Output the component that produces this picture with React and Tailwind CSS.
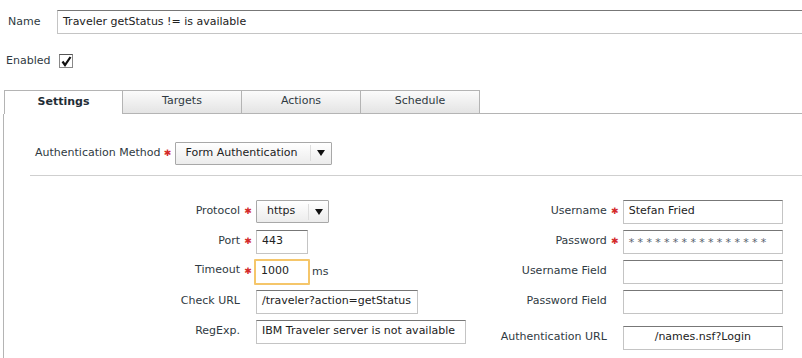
export default function App() {
  const input =
    "h-[24px] border border-[#c4c4c4] border-t-[#777] bg-white px-[5px] flex items-center whitespace-nowrap overflow-hidden shrink-0";

  return (
    <div className="w-[802px] h-[358px] overflow-hidden bg-white font-['DejaVu_Sans',sans-serif] text-[11px] text-[#2f3a42]">
      {/* Name */}
      <div className="flex items-center pt-[10px]">
        <div className="w-[57px] pl-[8px] shrink-0">Name</div>
        <div className={`${input} w-[780px] text-[#222]`}>Traveler getStatus != is available</div>
      </div>

      {/* Enabled */}
      <div className="flex items-center mt-[19px] pl-[6px] gap-[9px]">
        <span>Enabled</span>
        <span className="w-[14px] h-[14px] border border-[#888] border-t-[#555] bg-white flex items-center justify-center">
          <svg width="11" height="11" viewBox="0 0 11 11">
            <path d="M1.5 5.5 L4 9 L9.5 1" fill="none" stroke="#111" strokeWidth="2.2" />
          </svg>
        </span>
      </div>

      {/* Tabs */}
      <div className="flex mt-[20px] pl-[4px]">
        <div className="w-[119px] h-[24px] border border-b-0 border-[#b4b4b4] bg-white flex items-center justify-center font-bold text-[#1f2d36]">
          Settings
        </div>
        {["Targets", "Actions", "Schedule"].map((t) => (
          <div
            key={t}
            className="w-[119px] h-[24px] border border-l-0 border-[#b4b4b4] bg-gradient-to-b from-[#fbfbfb] to-[#e4e4e4] flex items-center justify-center text-[#2f3a42]"
          >
            {t}
          </div>
        ))}
        <div className="flex-1 border-b border-[#b4b4b4]" />
      </div>

      {/* Panel */}
      <div className="ml-[3px] border-l border-[#b4b4b4] h-[250px]">
        <div className="flex items-center pl-[31px] pt-[28px]">
          <span>Authentication Method</span>
          <Star className="w-[14px]" />
          <div className="w-[157px] h-[23px] border border-[#a8a8a8] rounded-[1px] bg-gradient-to-b from-white to-[#ececec] flex items-center">
            <span className="flex-1 pl-[10px] text-[#222]">Form Authentication</span>
            <span className="w-[21px] h-[16px] border-l border-[#ddd] flex items-center justify-center">
              <svg width="8" height="6" viewBox="0 0 8 6"><path d="M0 0 H8 L4 6 Z" fill="#111" /></svg>
            </span>
          </div>
        </div>

        <div className="ml-[26px] mt-[10px] border-t border-[#cfcfcf]" />

        <div className="flex pt-[21px]">
          {/* Left column */}
          <div className="flex flex-col w-[480px]">
            <Row label="Protocol" req labelW="w-[236px]">
              <div className="w-[73px] h-[23px] border border-[#a8a8a8] rounded-[1px] bg-gradient-to-b from-white to-[#ececec] flex items-center">
                <span className="flex-1 pl-[10px] text-[#222]">https</span>
                <span className="w-[20px] h-[16px] border-l border-[#ddd] flex items-center justify-center">
                  <svg width="8" height="6" viewBox="0 0 8 6"><path d="M0 0 H8 L4 6 Z" fill="#111" /></svg>
                </span>
              </div>
            </Row>
            <Row label="Port" req labelW="w-[236px]">
              <div className={`${input} w-[52px] text-[#222]`}>443</div>
            </Row>
            <Row label="Timeout" req labelW="w-[236px]" labelClass="-mt-[3px]">
              <div className="flex items-center">
                <div className="ml-[-2px] h-[26px] w-[56px] border-2 border-[#f5c66a] rounded-[1px] bg-white px-[5px] flex items-center text-[#222]">1000</div>
                <span className="ml-[2px] mt-[2px]">ms</span>
              </div>
            </Row>
            <Row label="Check URL" labelW="w-[236px]">
              <div className={`${input} w-[162px] text-[#222]`}>/traveler?action=getStatus</div>
            </Row>
            <Row label="RegExp." labelW="w-[236px]">
              <div className={`${input} w-[210px] text-[#222]`}>IBM Traveler server is not available</div>
            </Row>
          </div>

          {/* Right column */}
          <div className="flex flex-col w-[320px]">
            <Row label="Username" req labelW="w-[124px]">
              <div className={`${input} w-[160px] text-[#222]`}>Stefan Fried</div>
            </Row>
            <Row label="Password" req labelW="w-[124px]">
              <div className={`${input} w-[160px] text-[#5a6670] text-[11px] tracking-[3.3px] items-start pt-[4px]`}>****************</div>
            </Row>
            <Row label="Username Field" labelW="w-[124px]">
              <div className={`${input} w-[160px]`} />
            </Row>
            <Row label="Password Field" labelW="w-[124px]">
              <div className={`${input} w-[160px]`} />
            </Row>
            <div className="mt-[6px]">
              <Row label="Authentication URL" labelW="w-[124px]">
                <div className={`${input} w-[160px] justify-center text-[#222]`}>/names.nsf?Login</div>
              </Row>
            </div>
          </div>
        </div>
      </div>
    </div>
  );
}

function Star({ className }) {
  return (
    <span className={`${className} shrink-0 flex justify-center items-center text-[#d42a2a] text-[9px] leading-none`}>
      ✱
    </span>
  );
}

function Row({ label, req, children, labelW, labelClass = "" }) {
  return (
    <div className="flex items-center h-[30px]">
      <div className={`${labelW} ${labelClass} text-right shrink-0`}>{label}</div>
      {req ? <Star className="w-[16px]" /> : <span className="w-[16px] shrink-0" />}
      {children}
    </div>
  );
}
